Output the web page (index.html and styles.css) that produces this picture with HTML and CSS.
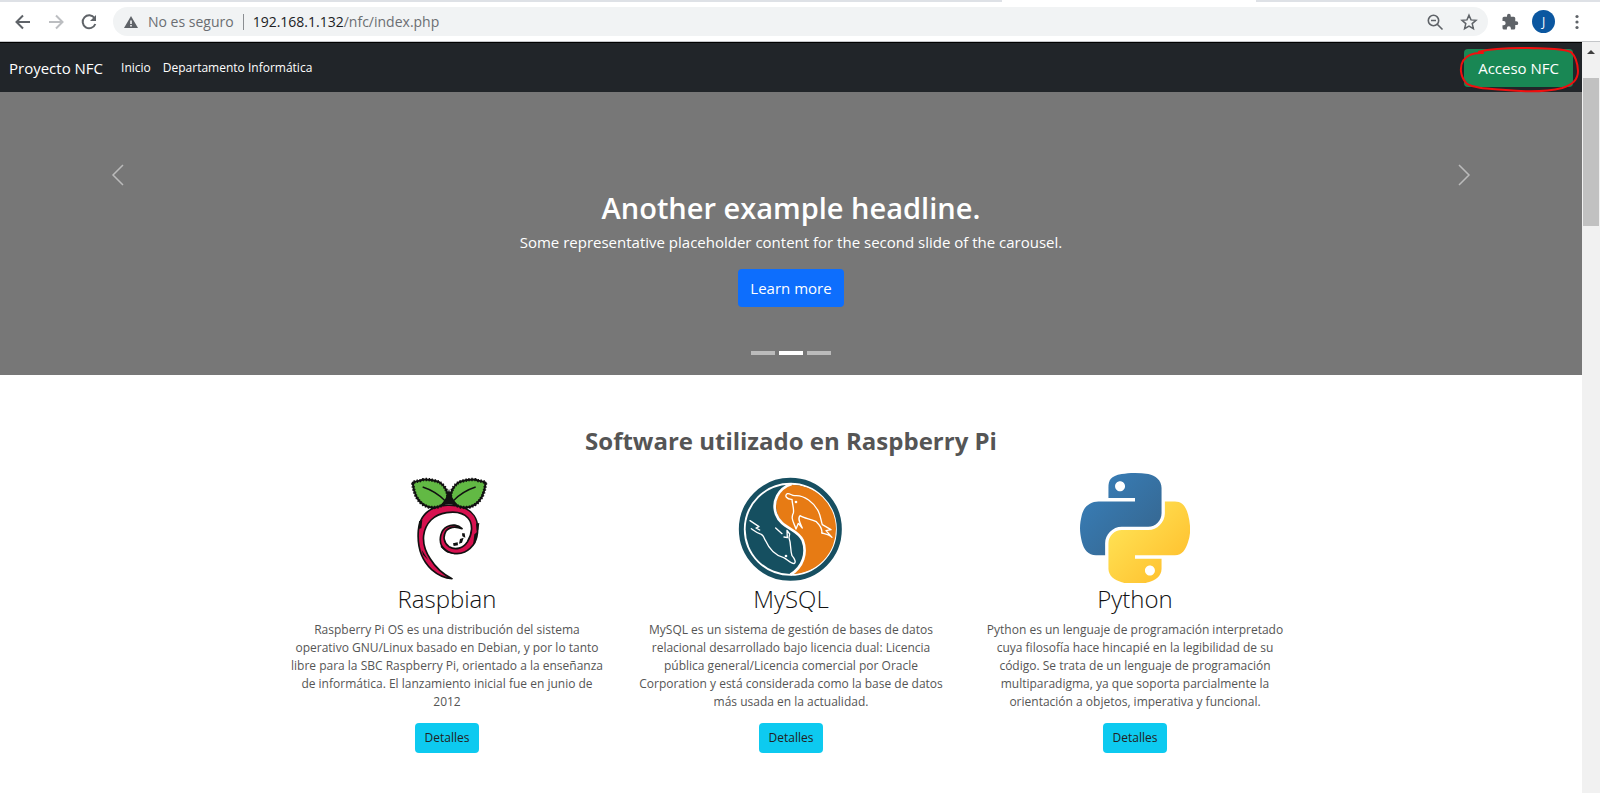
FILE: index.html
```html
<!DOCTYPE html>
<html lang="es">
<head>
<meta charset="utf-8">
<title>Proyecto NFC</title>
<link rel="stylesheet" href="styles.css">
</head>
<body>
<div class="browser">
  <div class="tabs-edge"><span class="active-tab"></span></div>
  <div class="toolbar">
    <button class="tool" aria-label="Atrás"><svg width="24" height="24" viewBox="0 0 24 24" fill="none" stroke="#5f6368" stroke-width="2"><path d="M19 12H6M12 5.500L5.500 12l6.500 6.500"/></svg></button>
    <button class="tool" aria-label="Adelante"><svg width="24" height="24" viewBox="0 0 24 24" fill="none" stroke="#bcbec1" stroke-width="2"><path d="M5 12h13M12 5.500l6.500 6.500L12 18.500"/></svg></button>
    <button class="tool" aria-label="Recargar"><svg width="24" height="24" viewBox="0 0 24 24" fill="none" stroke="#5f6368" stroke-width="2"><path d="M17.500 8A6.500 6.500 0 1 0 18.300 14"/><path d="M19 5v6h-6z" fill="#5f6368" stroke="none"/></svg></button>
    <div class="address">
      <svg width="16" height="16" viewBox="0 0 16 16"><path d="M8 2l7 12H1z" fill="#5f6368"/><path d="M8 6.500v3.500M8 11v1.500" stroke="#fff" stroke-width="1.500"/></svg>
      <span class="insecure">No es seguro</span>
      <span class="divider"></span>
      <span class="url"><b>192.168.1.132</b>/nfc/index.php</span>
      <button class="tool zoom" aria-label="Zoom"><svg width="18" height="18" viewBox="0 0 18 18" fill="none" stroke="#5f6368" stroke-width="1.600"><circle cx="7.500" cy="7.500" r="5.200"/><path d="M11 11l5.500 5.500M5 7.500h5"/></svg></button>
      <button class="tool" aria-label="Favorito"><svg width="18" height="18" viewBox="0 0 18 18" fill="none" stroke="#5f6368" stroke-width="1.500"><path d="M9 2.200l2 4.700 5 .4-3.800 3.300 1.200 5L9 13l-4.400 2.600 1.200-5L2 7.300l5-.4z"/></svg></button>
    </div>
    <button class="tool ext" aria-label="Extensiones"><svg width="18" height="18" viewBox="0 0 24 24" fill="#5f6368"><path d="M20.500 11H19V7a2 2 0 0 0-2-2h-4V3.500a2.500 2.500 0 0 0-5 0V5H4a2 2 0 0 0-2 2v3.800h1.500a2.700 2.700 0 0 1 0 5.400H2V20a2 2 0 0 0 2 2h3.800v-1.500a2.700 2.700 0 0 1 5.400 0V22H17a2 2 0 0 0 2-2v-4h1.500a2.500 2.500 0 0 0 0-5z"/></svg></button>
    <button class="avatar" aria-label="Perfil">J</button>
    <button class="tool" aria-label="Menú"><svg width="18" height="18" viewBox="0 0 18 18" fill="#5f6368"><circle cx="9" cy="3.500" r="1.600"/><circle cx="9" cy="9" r="1.600"/><circle cx="9" cy="14.500" r="1.600"/></svg></button>
  </div>
</div>
<div class="viewport">
  <div class="page">
    <header class="navbar">
      <a class="brand" href="#">Proyecto NFC</a>
      <nav class="links"><a href="#">Inicio</a><a href="#">Departamento Informática</a></nav>
      <div class="access">
        <button class="btn btn-success">Acceso NFC</button>
        <svg class="mark" width="120" height="48" viewBox="180 132 360 144" fill="none" stroke="#f00f0f" stroke-width="6" stroke-linecap="round"><path d="M240 152C280 142 330 140 390 141 450 143 490 142 516 153 530 166 536 190 537 210 537 236 520 252 490 261 440 273 370 272 320 267 270 263 225 262 203 248 182 225 182 196 193 178 204 162 225 154 252 156"/></svg>
      </div>
    </header>
    <section class="carousel">
      <button class="arrow" aria-label="Anterior"><svg width="22" height="22" viewBox="0 0 22 22" fill="none" stroke="#bbb" stroke-width="1.500"><path d="M16 1L6 11l10 10"/></svg></button>
      <div class="caption">
        <h1>Another example headline.</h1>
        <p>Some representative placeholder content for the second slide of the carousel.</p>
        <a class="btn btn-primary" href="#">Learn more</a>
        <div class="indicators"><button aria-label="1"></button><button class="on" aria-label="2"></button><button aria-label="3"></button></div>
      </div>
      <button class="arrow" aria-label="Siguiente"><svg width="22" height="22" viewBox="0 0 22 22" fill="none" stroke="#bbb" stroke-width="1.500"><path d="M6 1l10 10L6 21"/></svg></button>
    </section>
    <main class="software">
      <h2>Software utilizado en Raspberry Pi</h2>
      <div class="cards">
        <article class="card">
          <svg class="logo" viewBox="-22 25 330 330">
            <g stroke="#111" stroke-width="5" stroke-linejoin="round">
              <path d="M57 198C60 165 75 142 104 130 126 120 162 119 188 127 220 138 236 163 235 193 235 225 220 250 196 262 172 273 139 265 127 244 118 224 124 196 143 186 158 178 176 180 188 192 168 184 151 187 140 199 130 215 133 235 149 246 169 258 192 250 204 232 219 208 222 178 206 160 189 141 162 141 142 144 104 149 78 175 73 212 70 237 80 263 93 283 109 309 130 328 158 342 136 341 114 330 97 315 70 290 53 250 57 198z" fill="#d6114f"/>
              <path d="M145 105C134 127 98 137 72 120 52 107 43 84 40 54 55 47 62 50 71 45 91 43 106 48 119 52 135 61 148 82 145 105z" fill="#62b944" stroke-width="6"/>
              <path d="M154 105C165 127 201 137 227 120 247 107 256 84 259 54 244 47 237 50 228 45 208 43 193 48 180 52 164 61 151 82 154 105z" fill="#62b944" stroke-width="6"/>
              <path d="M145 105C134 127 98 137 72 120 52 107 43 84 40 54 55 47 62 50 71 45 91 43 106 48 119 52 135 61 148 82 145 105zM154 105C165 127 201 137 227 120 247 107 256 84 259 54 244 47 237 50 228 45 208 43 193 48 180 52 164 61 151 82 154 105z" fill="none" stroke-width="10" stroke-dasharray="4 5"/>
            </g>
            <path d="M149 72C145 93 135 111 118 127 138 117 161 117 185 129 166 113 154 94 149 72z" fill="#111"/>
            <path d="M70 67C95 75 118 89 137 108M229 67C204 75 181 89 162 108" fill="none" stroke="#111" stroke-width="4"/>
            <path d="M59 170l10-4-3 25-9 2zM230 177l10-2-3 20-5 3zM235 201l-7 35-7 8 4-35zM126 240l20 20 25 10-29-7-18-16zM67 255l20 32-16-17zM188 206l8 0 2 13-9-4zM182 223l11-4-5 15-9 3zM161 236l14-3 1 9-13 2z" fill="#111"/>
          </svg>
          <h3>Raspbian</h3>
          <p>Raspberry Pi OS es una distribución del sistema<br>operativo GNU/Linux basado en Debian, y por lo tanto<br>libre para la SBC Raspberry Pi, orientado a la enseñanza<br>de informática. El lanzamiento inicial fue en junio de<br>2012</p>
          <a class="btn btn-info" href="#">Detalles</a>
        </article>
        <article class="card">
          <svg class="logo" viewBox="18 9 330 330">
            <circle cx="181" cy="178" r="147" fill="#fff" stroke="#174f61" stroke-width="15"/>
            <circle cx="181" cy="178" r="134" fill="#154f60"/>
            <path d="M181 44A134 134 0 0 1 187 312C223 291 232 246 220 212 205 178 155 173 142 130 130 94 147 58 181 44z" fill="#e77b14"/>
            <path d="M185 42C145 55 125 94 138 132 153 175 203 176 218 211 232 248 220 291 181 314" fill="none" stroke="#fff" stroke-width="8"/>
            <g fill="none" stroke="#fff" stroke-width="4" stroke-linejoin="round" stroke-linecap="round">
              <path d="M186 88C170 89 162 76 172 71 180 69 184 77 194 77 223 74 253 99 265 124 272 138 273 153 277 164L303 179M306 202C297 192 285 192 275 189 279 175 268 164 259 155 243 147 222 145 210 137 202 145 210 160 217 174L205 160 198 177C192 158 181 146 190 129 193 119 187 103 186 88M303 179L288 182 306 202"/>
              <path d="M60 152L87 170 78 174 89 180M64 176C75 184 81 190 94 193 104 199 102 207 106 211 118 238 137 257 161 263 171 267 180 280 192 281 200 277 193 265 186 257 180 240 184 222 177 203L179 192 171 181 172 203 162 201M137 174L156 191"/>
            </g>
            <g fill="#fff"><circle cx="198" cy="96" r="4"/><circle cx="168" cy="258" r="4"/></g>
          </svg>
          <h3>MySQL</h3>
          <p>MySQL es un sistema de gestión de bases de datos<br>relacional desarrollado bajo licencia dual: Licencia<br>pública general/Licencia comercial por Oracle<br>Corporation y está considerada como la base de datos<br>más usada en la actualidad.</p>
          <a class="btn btn-info" href="#">Detalles</a>
        </article>
        <article class="card">
          <svg class="logo" viewBox="0 0 111 111">
            <defs>
              <linearGradient id="blue" x1="0.100" y1="0.100" x2="0.800" y2="0.800"><stop offset="0" stop-color="#387eb8"/><stop offset="1" stop-color="#366994"/></linearGradient>
              <linearGradient id="gold" x1="0.200" y1="0.200" x2="0.800" y2="0.800"><stop offset="0" stop-color="#ffe052"/><stop offset="1" stop-color="#ffc331"/></linearGradient>
            </defs>
            <path fill="url(#blue)" d="M54.919 0C50.335.022 45.958.413 42.106 1.095 30.760 3.099 28.700 7.295 28.700 15.032v10.219h26.813v3.406H18.638c-7.793 0-14.616 4.684-16.750 13.594-2.462 10.213-2.571 16.586 0 27.250 1.906 7.938 6.457 13.594 14.250 13.594h9.218v-12.250c0-8.850 7.657-16.657 16.750-16.657h26.781c7.455 0 13.407-6.138 13.407-13.625V15.032c0-7.266-6.130-12.725-13.407-13.937C64.282.328 59.502-.020 54.919 0zm-14.500 8.220c2.769 0 5.031 2.298 5.031 5.125 0 2.816-2.262 5.093-5.031 5.093-2.780 0-5.032-2.277-5.032-5.093 0-2.827 2.252-5.125 5.032-5.125z"/>
            <path fill="url(#gold)" d="M85.638 28.657v11.906c0 9.231-7.826 17-16.750 17H42.106c-7.336 0-13.406 6.279-13.406 13.625V96.720c0 7.266 6.318 11.540 13.406 13.625 8.487 2.495 16.626 2.946 26.782 0 6.750-1.955 13.406-5.888 13.406-13.625V86.501H55.513v-3.406h40.187c7.793 0 10.697-5.436 13.407-13.594 2.799-8.399 2.680-16.476 0-27.250-1.926-7.758-5.604-13.594-13.407-13.594zm-15.063 64.656c2.780 0 5.031 2.278 5.031 5.094 0 2.826-2.251 5.125-5.031 5.125-2.769 0-5.031-2.299-5.031-5.125 0-2.816 2.262-5.094 5.031-5.094z"/>
          </svg>
          <h3>Python</h3>
          <p>Python es un lenguaje de programación interpretado<br>cuya filosofía hace hincapié en la legibilidad de su<br>código. Se trata de un lenguaje de programación<br>multiparadigma, ya que soporta parcialmente la<br>orientación a objetos, imperativa y funcional.</p>
          <a class="btn btn-info" href="#">Detalles</a>
        </article>
      </div>
    </main>
  </div>
  <div class="scrollbar"><svg width="16" height="17" viewBox="0 0 16 17"><path d="M4 11l4-4 4 4z" fill="#404040"/></svg><div class="thumb"></div></div>
</div>
</body>
</html>
```
FILE: styles.css
```css
* { box-sizing: border-box; }
body {
  margin: 0;
  min-height: 100vh;
  display: flex;
  flex-direction: column;
  font-family: "Open Sans", "Noto Sans", sans-serif;
  color: #555;
  background: #fff;
}
button { border: 0; padding: 0; background: none; font: inherit; cursor: pointer; }
a { color: inherit; text-decoration: none; }
svg { display: block; flex: none; }
h1, h2, h3, p { margin: 0; }

.browser { border-bottom: 1px solid #c4c6c9; }
.tabs-edge { height: 2px; background: #dee1e6; display: flex; padding-left: 1002px; }
.active-tab { width: 254px; background: #fff; }
.toolbar { height: 39px; display: flex; align-items: center; padding: 0 14px 0 11px; }
.toolbar > .tool { margin-right: 9px; }
.tool { display: flex; }
.address {
  flex: 1;
  height: 29px;
  margin-left: 3px;
  padding: 0 10px;
  display: flex;
  align-items: center;
  border-radius: 15px;
  background: #f1f3f4;
  font-size: 14px;
  color: #6b6e72;
}
.insecure { margin-left: 9px; }
.divider { width: 1px; height: 16px; margin: 0 9px; background: #8b8e92; }
.url { flex: 1; }
.url b { font-weight: 400; color: #202124; }
.zoom { margin-right: 16px; }
.toolbar > .ext { margin: 0 13px; }
.avatar { width: 23px; height: 23px; margin-right: 13px; border-radius: 50%; background: #0b57a0; color: #fff; font-size: 12px; }
.toolbar > .tool:last-child { margin: 0; }

.viewport { flex: 1; display: flex; }
.page { flex: 1; min-width: 0; }
.scrollbar { width: 18px; padding: 1px 1px 0; background: #f1f1f1; }
.scrollbar svg { margin-bottom: 18px; }
.thumb { height: 148px; background: #c1c1c1; }

.navbar { height: 50px; padding: 0 9px; display: flex; align-items: center; background: #212529; border-top: 1px solid #000; color: #fff; }
.brand { font-size: 15px; }
.links { flex: 1; display: flex; gap: 12px; margin-left: 18px; font-size: 12px; }
.access { position: relative; }
.mark { position: absolute; left: -5px; top: -4px; pointer-events: none; }
.btn { display: inline-block; border-radius: 4px; text-align: center; }
.btn-success { height: 38px; padding: 0 14px; background: #198754; color: #fff; font-size: 15px; }

.carousel { height: 283px; display: flex; justify-content: space-between; padding: 0 107px; background: #777; color: #fff; }
.arrow { align-self: flex-start; margin-top: 72px; }
.caption { display: flex; flex-direction: column; align-items: center; padding-top: 96px; }
.caption h1 { font-size: 29px; line-height: 40px; font-weight: 600; }
.caption p { margin: 2px 0 15px; font-size: 15px; line-height: 24px; }
.btn-primary { padding: 7px 12px; background: #0d6efd; font-size: 15px; line-height: 24px; }
.indicators { display: flex; gap: 4px; margin-top: 44px; }
.indicators button { width: 24px; height: 4px; background: #bbb; }
.indicators .on { background: #fff; }

.software { max-width: 1032px; margin: 0 auto; padding: 48px 0 36px; text-align: center; }
.software h2 { font-size: 24px; line-height: 36px; font-weight: 700; }
.cards { display: grid; grid-template-columns: repeat(3, 1fr); margin-top: 14px; }
.card { display: flex; flex-direction: column; align-items: center; }
.logo { width: 110px; height: 110px; }
.card h3 { font-size: 24px; line-height: 32px; font-weight: 300; color: #111; }
.card p { margin: 6px 0 12px; font-size: 12px; line-height: 18px; white-space: nowrap; }
.btn-info { padding: 6px 10px; background: #0dcaf0; color: #222; font-size: 12px; line-height: 18px; }
```
